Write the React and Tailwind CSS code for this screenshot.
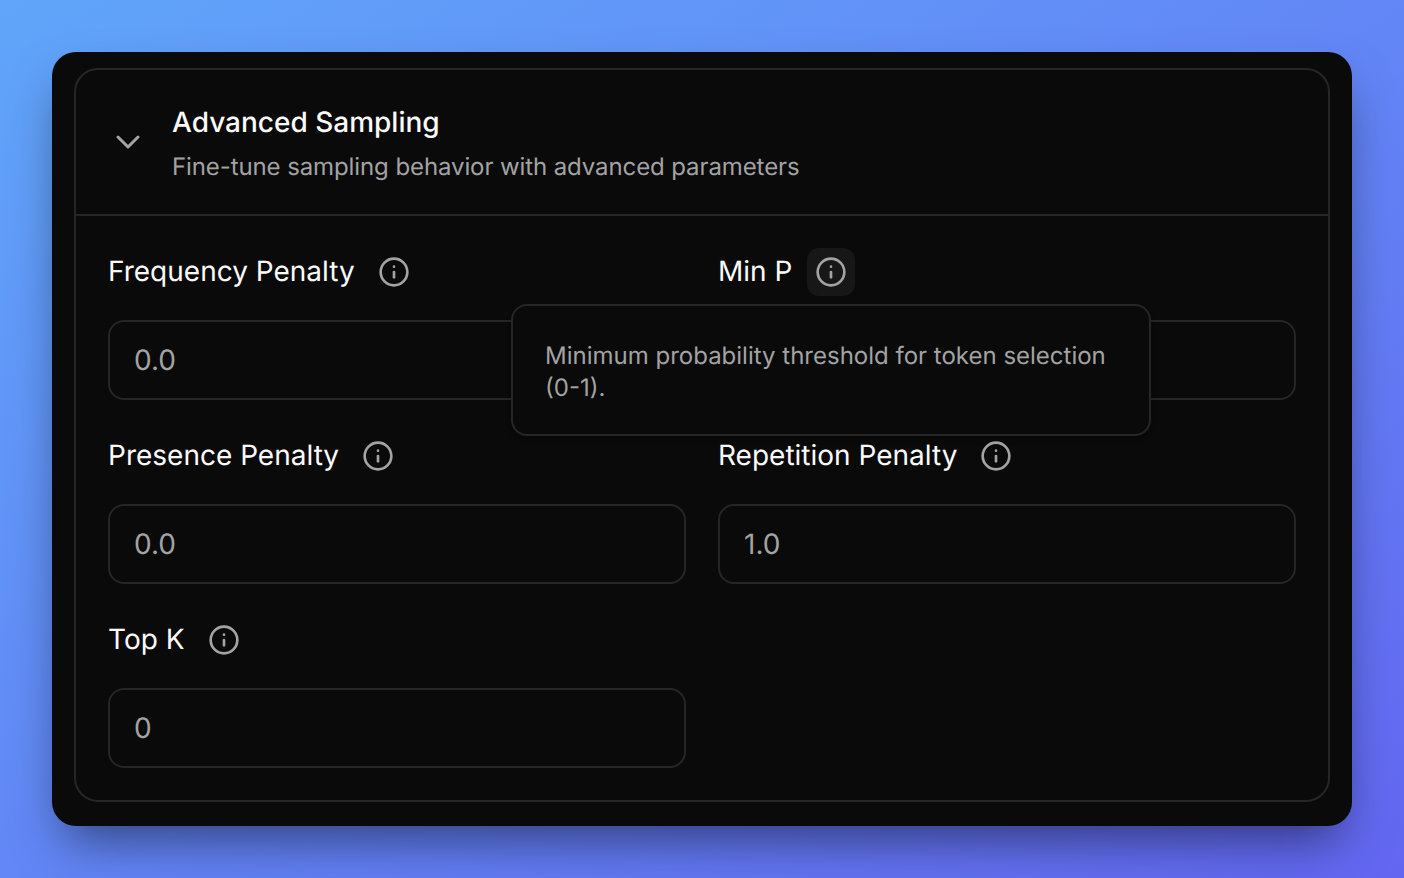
import React from "react";
import { ChevronDown, Info } from "lucide-react";

const Field = ({ label, value, active, children }) => (
  <div className="relative flex flex-col gap-6">
    <div className="flex h-12 items-center">
      <label className="-mt-0.5 text-[28px] leading-10 font-normal text-[#fafafa]">{label}</label>
      <span
        className={`ml-[15px] flex size-12 items-center justify-center rounded-xl text-[#a3a3a3] ${
          active ? "bg-[#171717]" : ""
        }`}
      >
        <Info size={32} strokeWidth={2} />
      </span>
    </div>
    <div className="flex h-20 items-center rounded-2xl border-2 border-[#262626] px-6 text-[28px] text-[#a3a3a3]">
      {value}
    </div>
    {children}
  </div>
);

export default function App() {
  return (
    <div className="h-[878px] w-full bg-gradient-to-br from-[#60a5fa] to-[#6366f1] p-[52px] font-['Inter',sans-serif] [text-rendering:geometricPrecision]">
      <div className="rounded-3xl bg-[#0a0a0a] px-[22px] pt-4 pb-6 shadow-[0_25px_50px_-12px_rgba(0,0,0,0.5)]">
        <div className="rounded-3xl border-2 border-[#262626]">
          {/* Header */}
          <div className="flex h-[146px] items-center gap-6 border-b-2 border-[#262626] pl-8">
            <ChevronDown size={40} strokeWidth={1.8} className="text-[#a3a3a3]" />
            <div className="flex flex-col gap-[11px] pt-0.5">
              <h2 className="text-[28px] leading-9 font-medium text-[#fafafa]">Advanced Sampling</h2>
              <p className="text-2xl leading-8 tracking-[-0.1px] text-[#a3a3a3]">
                Fine-tune sampling behavior with advanced parameters
              </p>
            </div>
          </div>

          {/* Fields */}
          <div className="grid grid-cols-2 gap-8 p-8">
            <Field label="Frequency Penalty" value="0.0" />
            <Field label="Min P" value="" active>
              <div className="absolute top-14 -left-[207px] z-10 w-[640px] rounded-2xl border-2 border-[#262626] bg-[#0a0a0a] px-8 pt-[34px] pb-[30px] text-2xl leading-8 text-[#a3a3a3] shadow-md">
                Minimum probability threshold for token selection (0-1).
              </div>
            </Field>
            <Field label="Presence Penalty" value="0.0" />
            <Field label="Repetition Penalty" value="1.0" />
            <Field label="Top K" value="0" />
          </div>
        </div>
      </div>
    </div>
  );
}
